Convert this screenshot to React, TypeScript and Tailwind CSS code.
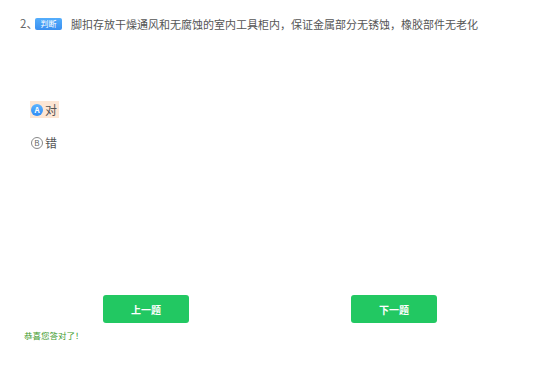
import React from 'react';

const font = '"Noto Sans CJK SC", "Liberation Sans", sans-serif';

export default function App() {
  return (
    <div className="w-[558px] h-[368px] bg-white relative overflow-hidden" style={{ fontFamily: font }}>
      {/* Question */}
      <div className="flex items-center pt-[17px] pl-[20px] h-[31px] text-[#555] text-[11px]">
        <span className="w-[15px] text-[11.5px] text-[#666] whitespace-nowrap">2、</span>
        <span className="inline-flex items-center justify-center w-[27px] h-[12px] rounded-[2px] bg-gradient-to-b from-[#54aefc] to-[#3a8ff0] text-white text-[8px] leading-none">
          判断
        </span>
        <span className="ml-[9px]">脚扣存放干燥通风和无腐蚀的室内工具柜内，保证金属部分无锈蚀，橡胶部件无老化</span>
      </div>

      {/* Options */}
      <div className="pl-[30px] mt-[70px] flex flex-col items-start gap-[16px] text-[12px] text-[#555]">
        <div className="flex items-center h-[17px] pl-[1px] pr-[2px] bg-[#fde6d4]">
          <span className="w-[12px] h-[12px] rounded-full bg-gradient-to-b from-[#5cb3ff] to-[#2f8cf5] text-white text-[8px] font-bold flex items-center justify-center leading-none">
            A
          </span>
          <span className="ml-[2px] leading-none">对</span>
        </div>
        <div className="flex items-center h-[17px] pl-[1px] pr-[2px]">
          <span className="w-[12px] h-[12px] rounded-full border border-[#888] text-[#666] text-[8px] flex items-center justify-center leading-none">
            B
          </span>
          <span className="ml-[2px] leading-none">错</span>
        </div>
      </div>

      {/* Buttons */}
      <div className="absolute left-0 right-0 top-[295px]">
        <div className="pl-[103px] flex gap-[162px]">
          <button className="w-[86px] h-[28px] rounded-[3px] bg-[#22c862] text-white text-[10px] font-bold">上一题</button>
          <button className="w-[86px] h-[28px] rounded-[3px] bg-[#22c862] text-white text-[10px] font-bold">下一题</button>
        </div>
        <div className="pl-[24px] mt-[8px] text-[8.5px] text-[#3e9b2e] leading-none">恭喜您答对了！</div>
      </div>
    </div>
  );
}
